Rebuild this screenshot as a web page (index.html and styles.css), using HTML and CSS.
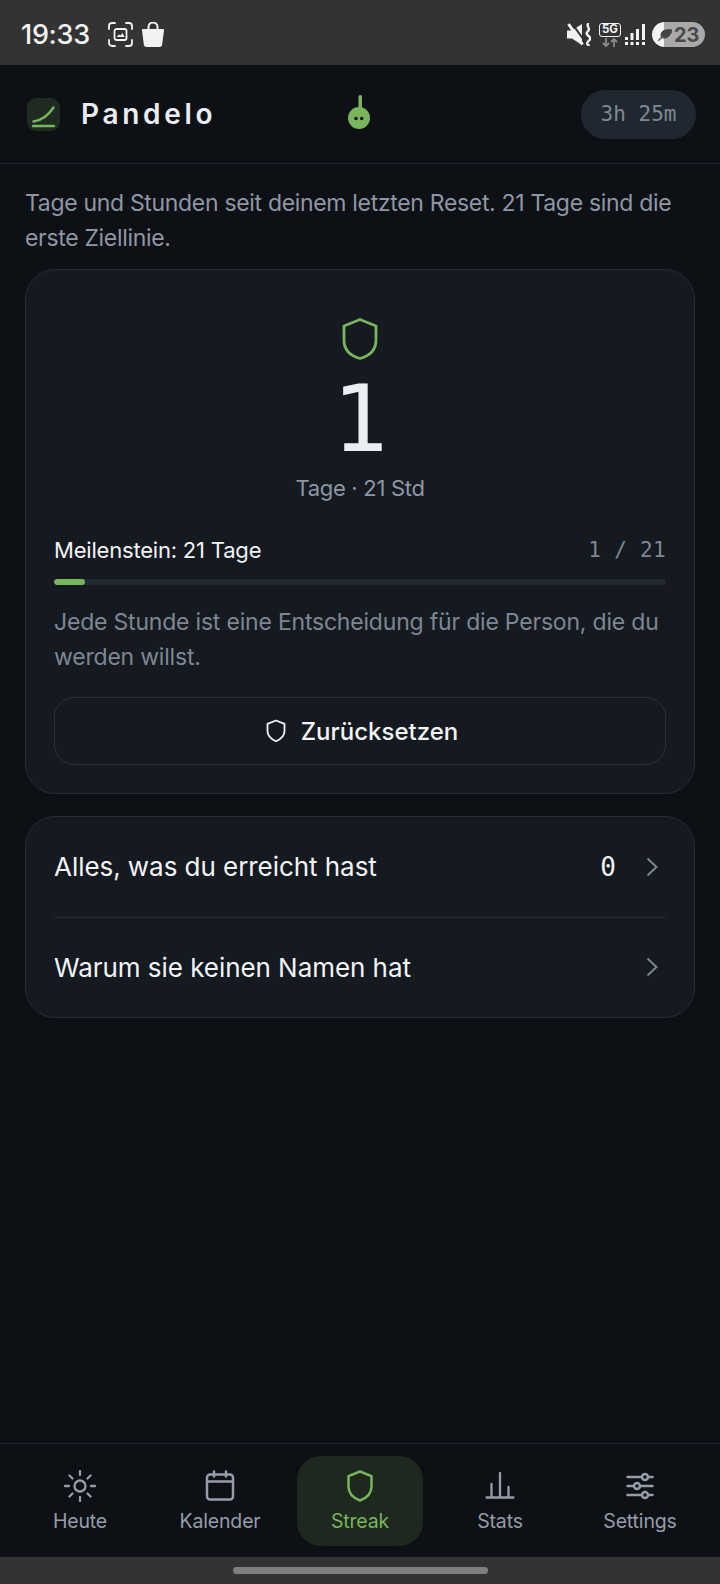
FILE: index.html
```html
<!DOCTYPE html>
<html lang="de">
<head>
<meta charset="utf-8">
<title>Pandelo</title>
<link rel="stylesheet" href="styles.css">
</head>
<body>
<div class="app">
  <div class="statusbar">
    <div class="status-left">
      <span class="clock">19:33</span>
      <svg class="st-shot" viewBox="0 0 25 25" fill="none" stroke="#f2f2f2" stroke-width="1.800" stroke-linecap="round"><path d="M1 7V4a3 3 0 0 1 3-3h3M18 1h3a3 3 0 0 1 3 3v3M24 18v3a3 3 0 0 1-3 3h-3M7 24H4a3 3 0 0 1-3-3v-3"/><rect x="6.500" y="7" width="12" height="11" rx="2" stroke-width="1.800"/><path d="M8.500 15l2.500-2.500 1.500 1 2-2.500 2 4z" fill="#f2f2f2" stroke="none"/></svg>
      <svg class="st-bag" viewBox="0 0 22 25"><path d="M1 7h20a1 1 0 0 1 1 1.200l-1.700 13.300A3.400 3.400 0 0 1 17 25H5a3.400 3.400 0 0 1-3.300-3.500L0 8.200A1 1 0 0 1 1 7z" fill="#f2f2f2"/><path d="M6.500 8V5a4.500 4.500 0 0 1 9 0v3" fill="none" stroke="#f2f2f2" stroke-width="2"/></svg>
    </div>
    <div class="status-right">
      <svg class="st-mute" viewBox="0 0 24 23"><path d="M0 7.500h5L15 1v21L5 15.500H0z" fill="#f2f2f2"/><path d="M4 -1L19 20" stroke="#333333" stroke-width="2"/><path d="M1.500 1l14 20.500" stroke="#f2f2f2" stroke-width="3"/><path d="M21.500 0c-3 3 2 5 0 7.500s-3 3 0 5.500 2 3 0 5 -2 3 1 5" fill="none" stroke="#f2f2f2" stroke-width="2.400"/></svg>
      <div class="st-net">
        <span class="st-5g">5G</span>
        <svg class="st-arrows" viewBox="0 0 16 9" fill="none" stroke="#8a8a8a" stroke-width="1.800"><path d="M4 0v8M1 5l3 3 3-3M12 9V1M9 4l3-3 3 3"/></svg>
      </div>
      <svg class="st-signal" viewBox="0 0 20 21" fill="#f2f2f2"><rect x="0" y="18" width="3" height="3"/><rect x="0" y="13" width="3" height="3"/><rect x="5.500" y="18" width="3" height="3"/><rect x="5.500" y="9" width="3" height="7"/><rect x="11" y="18" width="3" height="3"/><rect x="11" y="5" width="3" height="11"/><rect x="17" y="18" width="3" height="3"/><rect x="17" y="0" width="3" height="16"/></svg>
      <div class="st-batt"><svg class="st-leaf" viewBox="0 0 14 12"><path d="M14 1C8 0 3 1.500 3 6c0 2 1 3 3 3 5 0 7-4 8-8zM0.500 12c1-3 3-4 6-5" fill="#444444" stroke="#444444"/></svg><span class="st-level">23</span></div>
    </div>
  </div>

  <header class="topbar">
    <div class="brand">
      <span class="logo"><svg viewBox="0 0 33 33" fill="none" stroke="#79b55b" stroke-width="2.400" stroke-linecap="round"><path d="M6.500 23.500c8-1 14-5 20-14"/><path d="M6 28h21"/></svg></span>
      <span class="brand-name">Pandelo</span>
    </div>
    <svg class="mascot" viewBox="0 0 22 34"><rect x="10.500" y="0" width="3.500" height="18" rx="1.500" fill="#79b55b"/><circle cx="11" cy="23" r="11" fill="#79b55b"/><circle cx="8" cy="23.500" r="1.700" fill="#0d1015"/><circle cx="13.700" cy="23.500" r="1.700" fill="#0d1015"/></svg>
    <span class="timer">3h 25m</span>
  </header>

  <main class="content">
    <p class="intro">Tage und Stunden seit deinem letzten Reset. 21 Tage sind die erste Ziellinie.</p>

    <section class="card streak">
      <svg class="streak-shield" viewBox="0 0 36 42" fill="none" stroke="#79b55b" stroke-width="2.800" stroke-linejoin="round"><path d="M18 1.500l16 6.500v14c0 10-7 16-16 18.500C9 38 2 32 2 22V8z"/></svg>
      <div class="streak-num">1</div>
      <div class="streak-sub">Tage · 21 Std</div>
      <div class="mile-row">
        <span class="mile-label">Meilenstein: 21 Tage</span>
        <span class="mile-count">1 / 21</span>
      </div>
      <div class="progress"><div class="progress-fill" style="width:5%"></div></div>
      <p class="quote">Jede Stunde ist eine Entscheidung für die Person, die du werden willst.</p>
      <button class="reset">
        <svg viewBox="0 0 20 24" fill="none" stroke="#f2f4f7" stroke-width="1.800" stroke-linejoin="round"><path d="M10 1.500l8.500 3.300v7.200c0 5-3.700 8.200-8.500 10.300C5.200 20.200 1.500 17 1.500 12V4.800z"/></svg>
        <span>Zurücksetzen</span>
      </button>
    </section>

    <section class="card list">
      <div class="list-row">
        <span class="list-label">Alles, was du erreicht hast</span>
        <span class="list-count">0</span>
        <svg class="chev" viewBox="0 0 12 20" fill="none" stroke="#7f8794" stroke-width="1.900"><path d="M1.500 1.500L10.500 10l-9 8.500"/></svg>
      </div>
      <div class="list-row">
        <span class="list-label">Warum sie keinen Namen hat</span>
        <svg class="chev" viewBox="0 0 12 20" fill="none" stroke="#7f8794" stroke-width="1.900"><path d="M1.500 1.500L10.500 10l-9 8.500"/></svg>
      </div>
    </section>
  </main>

  <nav class="tabs">
    <div class="tab">
      <svg viewBox="0 0 32 32" fill="none" stroke="#959daa" stroke-width="2.300" stroke-linecap="round"><circle cx="16" cy="16" r="5.500"/><path d="M16 1v4M16 27v4M1 16h4M27 16h4M5.500 5.500l3 3M23.500 23.500l3 3M5.500 26.500l3-3M23.500 8.500l3-3"/></svg>
      <span>Heute</span>
    </div>
    <div class="tab">
      <svg viewBox="0 0 32 32" fill="none" stroke="#959daa" stroke-width="2.500" stroke-linecap="round"><rect x="3" y="4.500" width="26" height="25" rx="3"/><path d="M3 11.500h26M10 1.500v5M22 1.500v5"/></svg>
      <span>Kalender</span>
    </div>
    <div class="tab active">
      <svg viewBox="0 0 32 32" fill="none" stroke="#79b55b" stroke-width="2.500" stroke-linejoin="round"><path d="M16 1.500l11.500 4.700v10.300c0 7.500-5 11.500-11.500 14C9.500 28 4.500 24 4.500 16.500V6.200z"/></svg>
      <span>Streak</span>
    </div>
    <div class="tab">
      <svg viewBox="0 0 32 32" fill="none" stroke="#959daa" stroke-width="2.300" stroke-linecap="round"><path d="M2.500 27.500h27M7.500 27V14M16 27V3M24.500 27V17"/></svg>
      <span>Stats</span>
    </div>
    <div class="tab">
      <svg viewBox="0 0 32 32" fill="none" stroke="#959daa" stroke-width="2.500" stroke-linecap="round"><path d="M3.500 7h13M25 7h3.500M3.500 16h6M16.500 16h12M3.500 25h13M25 25h3.500"/><circle cx="21" cy="7" r="3"/><circle cx="13" cy="16" r="3"/><circle cx="21" cy="25" r="3"/></svg>
      <span>Settings</span>
    </div>
  </nav>

  <div class="homebar"><span class="home-pill"></span></div>
</div>
</body>
</html>
```

FILE: styles.css
```css
* { box-sizing: border-box; }
html, body { margin: 0; padding: 0; background: #0d1015; }
body { font-family: "Inter", "Noto Sans", sans-serif; color: #f2f4f7; }

.app { width: 720px; height: 1584px; display: flex; flex-direction: column; overflow: hidden; }

.statusbar { height: 65px; background: #333333; display: flex; align-items: center; justify-content: space-between; padding: 4px 15px 0 21px; flex: none; }
.status-left { display: flex; align-items: center; }
.clock { font-size: 27px; font-weight: 500; color: #f2f2f2; letter-spacing: -0.3px; }
.st-shot { width: 25px; height: 25px; margin-left: 18px; }
.st-bag { width: 22px; height: 25px; margin-left: 9px; }
.status-right { display: flex; align-items: center; }
.st-mute { width: 24px; height: 23px; }
.st-net { display: flex; flex-direction: column; align-items: center; margin-left: 8px; width: 22px; }
.st-5g { border: 1.500px solid #f2f2f2; border-radius: 3px; font-size: 11.500px; line-height: 11px; height: 14px; width: 22px; text-align: center; font-weight: 700; color: #f2f2f2; }
.st-arrows { width: 16px; height: 9px; margin-top: 1px; }
.st-signal { width: 20px; height: 21px; margin-left: 4px; }
.st-batt { margin-left: 7px; width: 53px; height: 25px; border-radius: 13px; background: linear-gradient(90deg, #f2f2f2 0 12px, #a9a9a9 12px); display: flex; align-items: center; padding-left: 6px; }
.st-leaf { width: 14px; height: 12px; flex: none; }
.st-level { font-size: 20px; font-weight: 700; color: #4a4a4a; margin-left: 2px; }

.topbar { height: 99px; flex: none; border-bottom: 1px solid #20252e; display: flex; align-items: center; justify-content: space-between; padding: 0 24px 0 27px; position: relative; }
.brand { display: flex; align-items: center; gap: 21px; }
.logo { width: 33px; height: 33px; border-radius: 9px; background: #1f2a20; display: block; }
.logo svg { width: 33px; height: 33px; display: block; }
.brand-name { font-size: 28px; font-weight: 600; letter-spacing: 3.700px; color: #eaedf3; }
.mascot { width: 22px; height: 34px; position: absolute; left: 348px; top: 30px; }
.timer { width: 115px; height: 49px; border-radius: 25px; background: #212730; color: #7f8794; font-family: "DejaVu Sans Mono", monospace; font-size: 21px; display: flex; align-items: center; justify-content: center; letter-spacing: 0; }

.content { flex: 1; padding: 22px 25px 0; display: flex; flex-direction: column; }
.intro { margin: 0 0 14px; font-size: 23px; line-height: 34.500px; letter-spacing: -0.320px; color: #8f97a5; }

.card { background: #151a20; border: 1px solid #262c35; border-radius: 30px; }
.streak { height: 525px; padding: 48px 28px 0; display: flex; flex-direction: column; align-items: stretch; }
.streak-shield { width: 36px; height: 42px; align-self: center; flex: none; }
.streak-num { font-family: "DejaVu Sans Mono", monospace; font-size: 93px; line-height: 84px; text-align: center; color: #eceef3; margin-top: 17px; }
.streak-sub { font-size: 22px; line-height: 32px; letter-spacing: -0.300px; text-align: center; color: #8f97a5; margin-top: 11px; }
.mile-row { display: flex; justify-content: space-between; align-items: center; margin-top: 28px; height: 36px; }
.mile-label { font-size: 22px; letter-spacing: -0.200px; color: #f2f4f7; }
.mile-count { font-family: "DejaVu Sans Mono", monospace; font-size: 21px; color: #7f8794; letter-spacing: 0.300px; }
.progress { height: 6px; border-radius: 3px; background: #232932; margin-top: 11px; overflow: hidden; flex: none; }
.progress-fill { height: 100%; background: #79b55b; border-radius: 3px; }
.quote { margin: 20px 0 0; font-size: 23px; line-height: 34.500px; letter-spacing: -0.200px; color: #7e8694; }
.reset { margin-top: 23px; height: 68px; flex: none; border: 1px solid #2a303a; border-radius: 20px; background: transparent; color: #f2f4f7; display: flex; align-items: center; justify-content: center; gap: 15px; font-family: inherit; font-size: 24px; font-weight: 500; padding: 0 0 0 4px; }
.reset svg { width: 20px; height: 24px; }

.list { margin-top: 22px; padding: 0 28px; height: 202px; display: flex; flex-direction: column; }
.list-row { flex: 1; display: flex; align-items: center; }
.list-row + .list-row { border-top: 1px solid #262c35; }
.list-label { flex: 1; font-size: 26px; letter-spacing: -0.050px; color: #f2f4f7; }
.list-count { font-family: "DejaVu Sans Mono", monospace; font-size: 26px; color: #f2f4f7; margin-right: 30px; }
.chev { width: 12px; height: 20px; margin-right: 8px; }

.tabs { height: 114px; flex: none; border-top: 1px solid #20252e; display: grid; grid-template-columns: repeat(5, 1fr); padding: 12px 17px 0; column-gap: 14px; }
.tab { height: 90px; border-radius: 24px; display: flex; flex-direction: column; align-items: center; padding-top: 14px; color: #959daa; font-size: 19.500px; line-height: 24px; letter-spacing: -0.150px; gap: 7px; }
.tab svg { width: 32px; height: 32px; flex: none; }
.tab.active { background: #1e281f; color: #79b55b; }

.homebar { height: 27px; flex: none; background: #333333; display: flex; align-items: center; justify-content: center; }
.home-pill { width: 255px; height: 7px; border-radius: 4px; background: #7f7f7f; }
```
